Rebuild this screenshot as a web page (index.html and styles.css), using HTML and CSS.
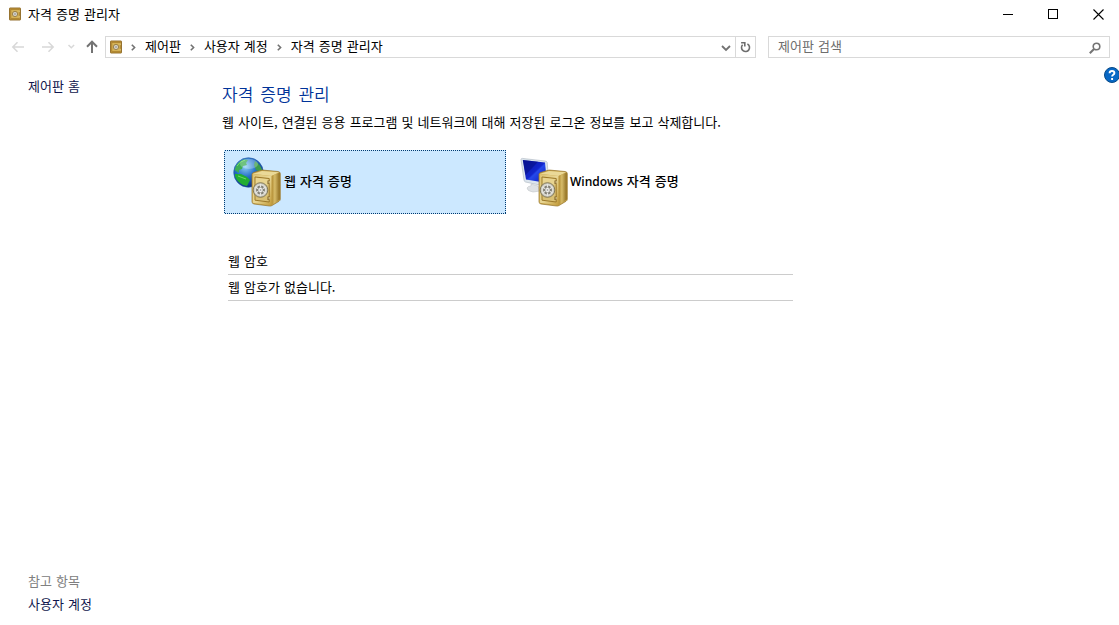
FILE: index.html
```html
<!DOCTYPE html>
<html lang="ko">
<head>
<meta charset="utf-8">
<title>자격 증명 관리자</title>
<link rel="stylesheet" href="styles.css">
</head>
<body>
<svg class="defs" width="0" height="0" aria-hidden="true">
  <defs>
    <linearGradient id="goldFront" x1="0" y1="0" x2="1" y2="1">
      <stop offset="0" stop-color="#dcc272"/><stop offset=".5" stop-color="#e9d795"/><stop offset="1" stop-color="#c39c3c"/>
    </linearGradient>
    <linearGradient id="goldSide" x1="0" y1="0" x2="1" y2="0">
      <stop offset="0" stop-color="#b08a30"/><stop offset=".4" stop-color="#d6bb69"/><stop offset="1" stop-color="#8f6d20"/>
    </linearGradient>
    <radialGradient id="ocean" cx=".4" cy=".3" r=".7">
      <stop offset="0" stop-color="#8fd0f5"/><stop offset=".5" stop-color="#2670c8"/><stop offset="1" stop-color="#0a2f86"/>
    </radialGradient>
    <linearGradient id="screen" x1="0" y1="0" x2="1" y2="1">
      <stop offset="0" stop-color="#0a14a0"/><stop offset=".5" stop-color="#1226cc"/><stop offset=".55" stop-color="#2448ea"/><stop offset="1" stop-color="#0c18b4"/>
    </linearGradient>
    <symbol id="smallSafe" viewBox="0 0 13 14">
      <rect x=".5" y=".5" width="12" height="13" rx=".6" fill="#c59b3c" stroke="#8c6723"/>
      <rect x="2" y="2" width="9" height="10" fill="#d5b357" stroke="#a87d2b" stroke-width=".8"/>
      <circle cx="6.5" cy="7" r="2.8" fill="#e6e0cc" stroke="#80652f" stroke-width=".8"/>
      <circle cx="6.5" cy="7" r="1" fill="#fff" stroke="#777" stroke-width=".7"/>
      <path d="M11 3v2M11 9v2" stroke="#ead78f"/>
    </symbol>
    <symbol id="safe" viewBox="0 0 30 38">
      <path d="M1 5.5Q1 4 2.500 3.500L10 1.300Q11 1 12 1.100L27 2.500Q29.300 2.800 29.300 4.500V30Q29.300 31.500 28 32.300L21 36.500Q20 37.200 18.500 37L3 35Q1 34.600 1 32.800Z" fill="#c8a64c" stroke="#957329" stroke-width=".7"/>
      <path d="M2 4.800L11 2L28 3.300L20.500 7Z" fill="#ead998"/>
      <path d="M20.500 7L28.800 3.500V30.500L20.500 36.200Z" fill="url(#goldSide)"/>
      <path d="M1.800 5L20.500 7V36.300L1.800 33.800Z" fill="url(#goldFront)"/>
      <path d="M4 8L18.200 9.500V33L4 31.200Z" fill="#d9c074" stroke="#9b7829"/>
      <path d="M4.700 8.800L17.500 10.200V15L4.700 19Z" fill="#efdf9f" opacity=".65"/>
      <path d="M17.500 11.500v3.500M17.500 27.500v3.500" stroke="#7b5d20" stroke-width="2"/>
      <path d="M18.100 12v2.500M18.100 28v2.500" stroke="#f5e9b4" stroke-width=".9"/>
      <circle cx="9.500" cy="21" r="7.300" fill="#c9c7bb" stroke="#6f6646" stroke-width=".8"/>
      <circle cx="9.500" cy="21" r="5.200" fill="#807e74" stroke="#deddd6" stroke-width="1.500"/>
      <path d="M9.500 15v12M4.300 18l10.400 6M14.700 18L4.300 24" stroke="#e6e6e2" stroke-width="1.200"/>
      <circle cx="9.500" cy="21" r="2.500" fill="#f3f3f0" stroke="#8b8a82" stroke-width=".6"/>
      <circle cx="9.500" cy="21" r="1" fill="#aaa"/>
    </symbol>
    <symbol id="crumbArrow" viewBox="0 0 5 7">
      <path d="M.8.700L3.600 3.500L.8 6.300" fill="none" stroke="#727272" stroke-width="1.600"/>
    </symbol>
  </defs>
</svg>
<div class="window">
  <header class="titlebar">
    <svg class="app-icon"><use href="#smallSafe"/></svg>
    <span class="title">자격 증명 관리자</span>
    <div class="controls">
      <svg width="11" height="11"><path d="M.5 5.500h10" stroke="#000" shape-rendering="crispEdges"/></svg>
      <svg width="11" height="11"><rect x=".5" y=".5" width="9" height="9" fill="none" stroke="#000"/></svg>
      <svg width="11" height="11"><path d="M.5.500l10 10M10.500.500l-10 10" stroke="#000" stroke-width="1.100"/></svg>
    </div>
  </header>
  <nav class="navbar">
    <svg class="nav-icons" width="105" height="22" fill="none">
      <g stroke="#d8d8d8" stroke-width="1.500">
        <path d="M13 11h11M17.500 6.200L12.800 11l4.700 4.800"/>
        <path d="M42 11h11M48.500 6.200L53.200 11l-4.700 4.800"/>
        <path d="M68.500 9l2.800 2.800L74.100 9"/>
      </g>
      <path d="M92 17V6M87 10.700l5-5 5 5" stroke="#737373" stroke-width="2"/>
    </svg>
    <div class="address">
      <svg class="address-icon"><use href="#smallSafe"/></svg>
      <svg class="crumb-arrow first"><use href="#crumbArrow"/></svg>
      <span class="crumb">제어판</span>
      <svg class="crumb-arrow"><use href="#crumbArrow"/></svg>
      <span class="crumb">사용자 계정</span>
      <svg class="crumb-arrow"><use href="#crumbArrow"/></svg>
      <span class="crumb">자격 증명 관리자</span>
      <svg class="dropdown" width="10" height="7"><path d="M1 1l4 4 4-4" fill="none" stroke="#727272" stroke-width="1.800"/></svg>
      <div class="refresh">
        <svg width="11" height="12" fill="none" stroke="#6d6d6d" stroke-width="1.600"><path d="M2.600 3.800A4 4 0 1 0 7.400 3"/><path d="M1.100 1.800H4.800V5.600"/></svg>
      </div>
    </div>
    <div class="search">
      <span>제어판 검색</span>
      <svg width="12" height="12" fill="none" stroke="#747474"><circle cx="7.500" cy="4.500" r="3.300" stroke-width="1.600"/><path d="M5 7L.8 11.200" stroke-width="2"/></svg>
    </div>
  </nav>
  <div class="body">
    <aside class="sidebar">
      <a class="side-link">제어판 홈</a>
      <div class="see-also">
        <span class="muted">참고 항목</span>
        <a class="side-link">사용자 계정</a>
      </div>
    </aside>
    <main class="content">
      <h1>자격 증명 관리</h1>
      <p class="description">웹 사이트, 연결된 응용 프로그램 및 네트워크에 대해 저장된 로그온 정보를 보고 삭제합니다.</p>
      <div class="vaults">
        <div class="vault">
          <svg class="focus-ring" width="282" height="64"><rect x=".5" y=".5" width="281" height="63" fill="none" stroke="#003a70" stroke-dasharray="1 1" shape-rendering="crispEdges"/></svg>
          <svg class="vault-icon" width="50" height="50">
            <circle cx="15.500" cy="15.500" r="14.800" fill="url(#ocean)" stroke="#265aa5" stroke-width=".6"/>
            <path d="M3 9Q6 4 11 2.500L15 3L13 6L14 8L10 9L9 12L6 13L6 16L3 14L1.500 13Z" fill="#3fae55"/>
            <path d="M22 4Q27 7 29.300 13L27 15L23 13L21 8Z" fill="#3d9c4c"/>
            <path d="M2 17L8 17L14 20L17 23L14 29L10 28Q4 25 2 19Z" fill="#22ad32"/>
            <path d="M4 9Q7 4 12 3M5 19L13 22" stroke="#8cee79" fill="none" opacity=".7"/>
            <ellipse cx="16" cy="7" rx="9" ry="5" fill="#fff" opacity=".25"/>
            <use href="#safe" x="18" y="12" width="30" height="38"/>
          </svg>
          <span>웹 자격 증명</span>
        </div>
        <div class="vault windows">
          <svg class="vault-icon" width="50" height="50">
            <path d="M11 27L18 29L20 34L13 35Q7 34 7 31Q8 29 11 29Z" fill="#dfe2e5" stroke="#c2c6ca" stroke-width=".6"/>
            <path d="M1 2.500Q1 1.500 2.300 1.400L25 4Q27 4.300 27.200 5.500L29 28.500Q29 30 27.500 29.700L5.500 25Q4.300 24.700 4 23Z" fill="#dce5ed" stroke="#a9b3bd" stroke-width=".6"/>
            <path d="M2.800 3L25 5.400L27 26L6 22.500Z" fill="url(#screen)"/>
            <path d="M3 3L18 4.700L5.500 18Z" fill="#071084" opacity=".55"/>
            <use href="#safe" x="18" y="12" width="30" height="38"/>
          </svg>
          <span><span class="latin">Windows</span> 자격 증명</span>
        </div>
      </div>
      <section class="passwords">
        <div class="row">웹 암호</div>
        <div class="row">웹 암호가 없습니다.</div>
      </section>
    </main>
    <svg class="help" width="16" height="16"><circle cx="8" cy="8" r="7.500" fill="#0868c5" stroke="#084b88"/><path d="M5.600 6.200Q5.600 4 8 4Q10.400 4 10.400 6Q10.400 7 9.200 7.800Q8.100 8.500 8.100 9.600M8.100 11v1.900" stroke="#fff" stroke-width="1.900" fill="none"/></svg>
  </div>
</div>
</body>
</html>
```
FILE: styles.css
```css
* { box-sizing: border-box; }
body {
  margin: 0;
  background: #fff;
  color: #000;
  font: 13px/16px "Noto Sans CJK KR", sans-serif;
  word-spacing: .45px;
  white-space: nowrap;
}
svg { display: block; flex: none; }
.defs { position: absolute; }
.window { width: 1119px; height: 625px; display: flex; flex-direction: column; overflow: hidden; }

.titlebar { height: 28px; display: flex; align-items: center; padding-left: 9px; }
.app-icon { width: 12px; height: 14px; margin-right: 7px; }
.controls { margin-left: auto; display: flex; gap: 34px; align-items: center; padding-right: 15px; }
.controls svg:nth-child(2) { margin-left: 1px; }

.navbar { height: 38px; display: flex; align-items: flex-start; padding-top: 8px; }
.address { width: 651px; height: 22px; border: 1px solid #d9d9d9; display: flex; align-items: center; padding-left: 4px; }
.address-icon { width: 12px; height: 14px; margin-bottom: 1px; }
.crumb-arrow { width: 5px; height: 7px; margin: 1px 9px 0; }
.crumb { padding-bottom: 2px; }
.dropdown { margin: 3px 4px 0 auto; }
.refresh { width: 20px; height: 20px; border-left: 1px solid #d9d9d9; display: flex; align-items: center; justify-content: center; }
.search { width: 342px; height: 22px; margin-left: 12px; border: 1px solid #d9d9d9; padding: 0 8px 2px 9px; display: flex; align-items: center; justify-content: space-between; color: #6d6d6d; }
.search svg { margin-top: 3px; }

.body { flex: 1; display: flex; min-height: 0; }
.sidebar { width: 222px; padding: 12px 0 13px 28px; display: flex; flex-direction: column; justify-content: space-between; }
.side-link { color: #10164c; }
.see-also { display: flex; flex-direction: column; gap: 7px; }
.muted { color: #808080; }

.content { width: 600px; padding-top: 16px; }
h1 { margin: 0; font-size: 17px; line-height: 24px; font-weight: 350; word-spacing: 2.2px; color: #003399; }
.description { margin: 8px 0 0; }
.vaults { display: flex; gap: 6px; margin: 20px 0 0 2px; }
.vault { position: relative; width: 282px; height: 64px; display: flex; align-items: center; padding-left: 9px; font-weight: 500; background: #cce8ff; }
.vault.windows { background: none; padding-left: 8px; }
.vault-icon { margin: 0 1px 0 0; }
.windows .vault-icon { margin-right: 0; }
.vault > span { padding-bottom: 2px; }
.focus-ring { position: absolute; left: 0; top: 0; }
.latin { font: 600 12px/16px "Open Sans", sans-serif; }
.passwords { width: 565px; margin: 34px 0 0 6px; }
.row { height: 26px; border-bottom: 1px solid #ccc; padding-top: 4px; }
.passwords .row:first-child { height: 27px; padding-top: 5px; }
.help { margin: 1px -1px 0 auto; }
```
